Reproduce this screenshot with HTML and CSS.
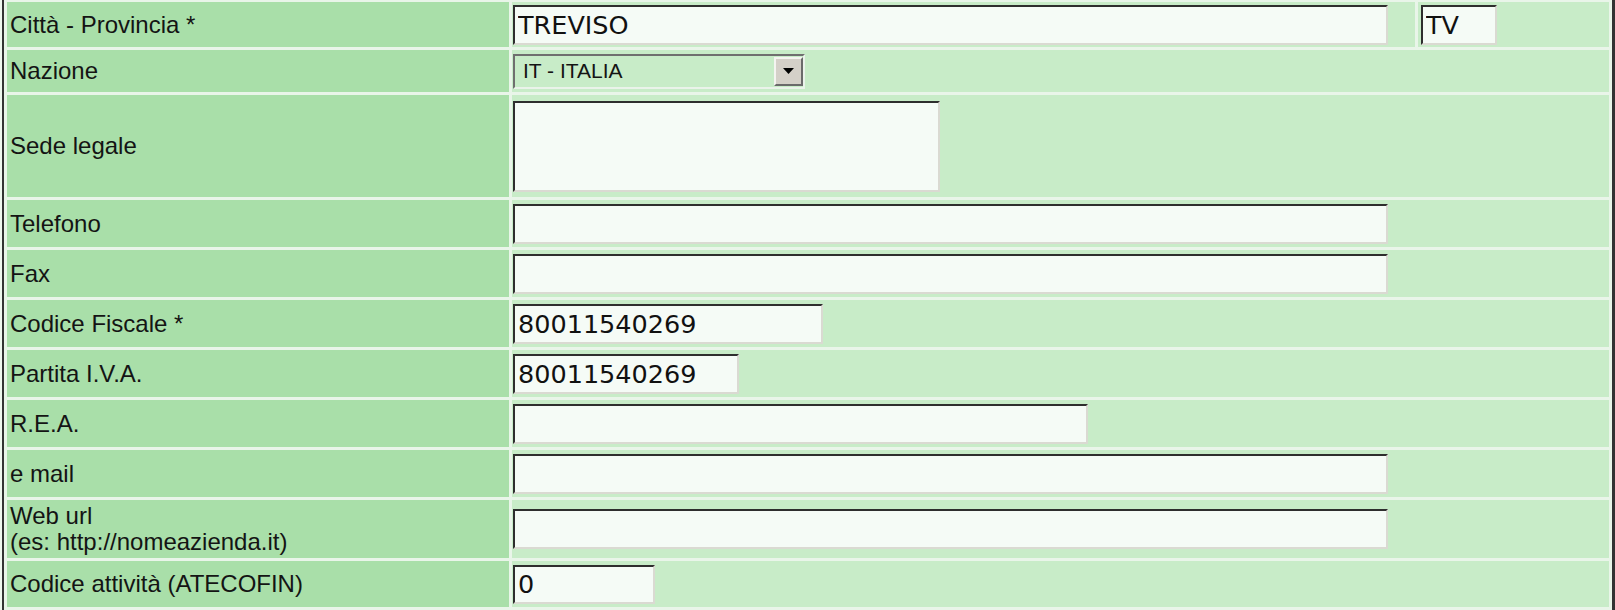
FILE: index.html
```html
<!DOCTYPE html>
<html lang="it">
<head>
<meta charset="utf-8">
<title>Dati azienda</title>
<link rel="stylesheet" href="styles.css">
</head>
<body>
<table class="form">
  <colgroup>
    <col class="c-label">
    <col class="c-main">
    <col class="c-side">
  </colgroup>
  <tr class="r-city">
    <td class="lbl">Città - Provincia *</td>
    <td class="val"><input class="in w-full" type="text" value="TREVISO"></td>
    <td class="val side"><input class="in w-prov" type="text" value="TV"></td>
  </tr>
  <tr class="r-nation">
    <td class="lbl">Nazione</td>
    <td class="val" colspan="2">
      <div class="select">
        <span class="select-text">IT - ITALIA</span>
        <span class="select-btn"><svg width="11" height="6" viewBox="0 0 11 6"><path d="M0 0H11L5.5 6Z" fill="#000"/></svg></span>
      </div>
    </td>
  </tr>
  <tr class="r-area">
    <td class="lbl">Sede legale</td>
    <td class="val" colspan="2"><textarea class="ta"></textarea></td>
  </tr>
  <tr class="r-std">
    <td class="lbl">Telefono</td>
    <td class="val" colspan="2"><input class="in w-full" type="text" value=""></td>
  </tr>
  <tr class="r-std">
    <td class="lbl">Fax</td>
    <td class="val" colspan="2"><input class="in w-full" type="text" value=""></td>
  </tr>
  <tr class="r-std">
    <td class="lbl">Codice Fiscale *</td>
    <td class="val" colspan="2"><input class="in w-cf" type="text" value="80011540269"></td>
  </tr>
  <tr class="r-std">
    <td class="lbl">Partita I.V.A.</td>
    <td class="val" colspan="2"><input class="in w-iva" type="text" value="80011540269"></td>
  </tr>
  <tr class="r-std">
    <td class="lbl">R.E.A.</td>
    <td class="val" colspan="2"><input class="in w-rea" type="text" value=""></td>
  </tr>
  <tr class="r-std">
    <td class="lbl">e mail</td>
    <td class="val" colspan="2"><input class="in w-full" type="text" value=""></td>
  </tr>
  <tr class="r-web">
    <td class="lbl">Web url<br>(es: http://nomeazienda.it)</td>
    <td class="val" colspan="2"><input class="in w-full" type="text" value=""></td>
  </tr>
  <tr class="r-last">
    <td class="lbl">Codice attività (ATECOFIN)</td>
    <td class="val" colspan="2"><input class="in w-ateco" type="text" value="0"></td>
  </tr>
</table>
</body>
</html>
```
FILE: styles.css
```css
html, body {
  margin: 0;
  padding: 0;
  background: #eef7ee;
  overflow: hidden;
}

.form {
  margin: -1px 0 0 2px;
  width: 1613px;
  table-layout: fixed;
  border-collapse: separate;
  border-spacing: 3px;
  background: #e9f5e9;
  border-left: 2px solid #333333;
  border-right: 3px solid #333333;
  border-top: 0;
  border-bottom: 0;
  font-family: "Liberation Sans", Arial, sans-serif;
  color: #141414;
}

.c-label { width: 502px; }
.c-main { width: 903px; }
.c-side { width: 191px; }

.form td {
  vertical-align: middle;
  box-sizing: border-box;
}

.lbl {
  background: #a9dfa9;
  font-size: 24px;
  line-height: 26px;
  padding: 0 0 0 3px;
  white-space: nowrap;
}

.val {
  background: #c8ecc8;
  padding: 0 1px;
}

.val.side {
  padding-left: 3px;
}

.r-city td { height: 45px; }
.r-nation td { height: 42px; }
.r-area td { height: 102px; }
.r-std td { height: 47px; }
.r-web td { height: 58px; }
.r-last td { height: 46px; }

.in,
.ta {
  display: block;
  box-sizing: border-box;
  margin: 0;
  height: 40px;
  padding: 0 3px;
  background: #f5fbf6;
  border-style: solid;
  border-width: 2px;
  border-color: #2e2e2e #dadad2 #dadad2 #2e2e2e;
  font-family: "DejaVu Sans", sans-serif;
  font-size: 25.5px;
  color: #111111;
  outline: none;
}

.ta {
  width: 427px;
  height: 91px;
  resize: none;
}

.w-full { width: 875px; }
.w-prov { width: 76px; }
.w-cf { width: 310px; }
.w-iva { width: 226px; }
.w-rea { width: 575px; }
.w-ateco { width: 142px; height: 39px; }

.select {
  box-sizing: border-box;
  width: 292px;
  height: 35px;
  display: flex;
  align-items: center;
  justify-content: space-between;
  background: #c8ecc8;
  border-style: solid;
  border-width: 2px;
  border-color: #6f6f6f #eaf3ea #eaf3ea #6f6f6f;
  padding: 0 0 0 8px;
}

.select-text {
  font-family: "Liberation Sans", Arial, sans-serif;
  font-size: 21px;
  color: #141414;
}

.select-btn {
  box-sizing: border-box;
  width: 29px;
  height: 29px;
  display: flex;
  align-items: center;
  justify-content: center;
  background: #d4d0c8;
  border-style: solid;
  border-width: 2px;
  border-color: #f4f4f0 #6a6a6a #6a6a6a #f4f4f0;
}
```
